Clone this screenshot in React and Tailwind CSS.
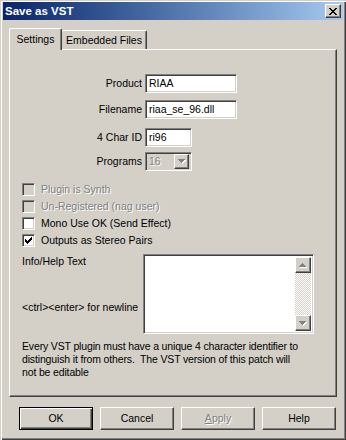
import React from "react";

const CHECK = [
  "......X",
  ".....XX",
  "X...XXX",
  "XX.XXX.",
  "XXXXX..",
  ".XXX...",
  "..X....",
];
const XMARK = [
  "XX....XX",
  ".XX..XX.",
  "..XXXX..",
  "...XX...",
  "..XXXX..",
  ".XX..XX.",
  "XX....XX",
];

function Pix({ rows, color, w, h }) {
  const rects = [];
  rows.forEach((r, y) =>
    r.split("").forEach((c, x) => {
      if (c === "X") rects.push(<rect key={x + "-" + y} x={x} y={y} width="1" height="1" fill={color} />);
    })
  );
  return (
    <svg width={w} height={h} viewBox={`0 0 ${w} ${h}`} shapeRendering="crispEdges">
      {rects}
    </svg>
  );
}

function Arrow({ up, disabled }) {
  const rows = up ? ["...X...", "..XXX..", ".XXXXX.", "XXXXXXX"] : ["XXXXXXX", ".XXXXX.", "..XXX..", "...X..."];
  if (!disabled) return <Pix rows={rows} color="#000" w={7} h={4} />;
  const rects = [];
  rows.forEach((r, y) =>
    r.split("").forEach((c, x) => {
      if (c === "X") {
        rects.push(<rect key={"w" + x + "-" + y} x={x + 1} y={y + 1} width="1" height="1" fill="#fff" />);
      }
    })
  );
  rows.forEach((r, y) =>
    r.split("").forEach((c, x) => {
      if (c === "X") rects.push(<rect key={"g" + x + "-" + y} x={x} y={y} width="1" height="1" fill="#808080" />);
    })
  );
  return (
    <svg width={8} height={5} viewBox="0 0 8 5" shapeRendering="crispEdges">
      {rects}
    </svg>
  );
}

const raised =
  "border border-t-white border-l-white border-r-[#404040] border-b-[#404040] shadow-[inset_-1px_-1px_0_#808080]";
const sunken =
  "border border-t-[#808080] border-l-[#808080] border-r-white border-b-white shadow-[inset_1px_1px_0_#404040,inset_-1px_-1px_0_#d4d0c8]";

function Field({ label, value, width, mt }) {
  return (
    <div className={`flex items-center gap-[3px] h-[19px] ${mt}`}>
      <div className="w-[120px] text-right leading-[13px]">{label}</div>
      <div className={`h-[19px] ${width} bg-white ${sunken} pl-[3px] flex items-center leading-[13px]`}>{value}</div>
    </div>
  );
}

function Check({ label, disabled, checked }) {
  return (
    <div className="flex items-center h-[17px]">
      <div
        className={`w-[13px] h-[13px] ${sunken} ${disabled ? "bg-[#d4d0c8]" : "bg-white"} flex items-center justify-center`}
      >
        {checked && <Pix rows={CHECK} color="#000" w={7} h={7} />}
      </div>
      <span
        className={`ml-[6px] leading-[13px] ${disabled ? "text-[#808080] [text-shadow:1px_1px_0_#fff]" : ""}`}
      >
        {label}
      </span>
    </div>
  );
}

function Btn({ children, def, disabled }) {
  const base = def
    ? "border border-black shadow-[inset_1px_1px_0_#fff,inset_-1px_-1px_0_#404040,inset_-2px_-2px_0_#808080]"
    : raised;
  return (
    <div
      className={`w-[74px] h-[23px] ${base} flex items-center justify-center leading-[13px] ${
        disabled ? "text-[#808080] [text-shadow:1px_1px_0_#fff]" : ""
      }`}
    >
      {children}
    </div>
  );
}

export default function App() {
  return (
    <div className="w-[346px] h-[440px] bg-[#d4d0c8] flex flex-col px-[3px] pt-[2px] text-[10.5px] text-black font-['Liberation_Sans',Arial,sans-serif] shadow-[inset_1px_1px_0_#d4d0c8,inset_2px_2px_0_#fff,inset_-1px_-1px_0_#404040,inset_-2px_-2px_0_#808080] overflow-hidden">
      {/* Title bar */}
      <div className="h-[18px] flex items-center justify-between bg-linear-to-r from-[#0a246a] to-[#a6caf0] pl-[2px] pr-[2px]">
        <span className="text-white font-bold text-[11.5px] leading-[14px]">Save as VST</span>
        <div className={`w-[16px] h-[14px] bg-[#d4d0c8] ${raised} flex items-center justify-center`}>
          <Pix rows={XMARK} color="#000" w={8} h={7} />
        </div>
      </div>

      {/* Tabs */}
      <div className="mx-[6px] mt-[8px] flex items-end h-[21px]">
        <div className="relative z-10 h-[22px] w-[53px] mb-[-1px] bg-[#d4d0c8] border-t border-l border-r border-t-white border-l-white border-r-[#404040] rounded-t-[2px] shadow-[inset_-1px_0_0_#808080] flex justify-center pt-[4px] leading-[13px]">
          Settings
        </div>
        <div className="h-[19px] w-[85px] bg-[#d4d0c8] border-t border-r border-t-white border-r-[#404040] rounded-t-[2px] shadow-[inset_-1px_0_0_#808080] flex justify-center pt-[3px] leading-[13px]">
          Embedded Files
        </div>
      </div>

      {/* Panel */}
      <div className={`mx-[6px] h-[348px] ${raised} pl-[12px] pt-[24px] flex flex-col`}>
        <Field label="Product" value="RIAA" width="w-[92px]" mt="" />
        <Field label="Filename" value="riaa_se_96.dll" width="w-[92px]" mt="mt-[7px]" />
        <Field label="4 Char ID" value="ri96" width="w-[47px]" mt="mt-[9px]" />
        <div className="flex items-center gap-[3px] h-[19px] mt-[5px]">
          <div className="w-[120px] text-right leading-[13px]">Programs</div>
          <div className={`h-[19px] w-[47px] bg-[#d4d0c8] ${sunken} flex items-center`}>
            <span className="pl-[3px] flex-1 text-[#808080] [text-shadow:1px_1px_0_#fff] leading-[13px]">16</span>
            <div className={`w-[15px] h-[15px] mr-[2px] ${raised} flex items-center justify-center`}>
              <Arrow disabled />
            </div>
          </div>
        </div>

        <div className="mt-[10px] flex flex-col">
          <Check label="Plugin is Synth" disabled />
          <Check label="Un-Registered (nag user)" disabled />
          <Check label="Mono Use OK (Send Effect)" />
          <Check label="Outputs as Stereo Pairs" checked />
        </div>

        <div className="flex mt-[5px]">
          <div className="w-[121px] flex flex-col leading-[14px] whitespace-nowrap">
            <span>Info/Help Text</span>
            <span className="mt-[32px]">&lt;ctrl&gt;&lt;enter&gt; for newline</span>
          </div>
          <div className={`w-[171px] h-[80px] bg-white ${sunken} flex justify-end p-[2px]`}>
            <div className="w-[16px] h-full flex flex-col bg-[repeating-conic-gradient(#d4d0c8_0_25%,#fff_0_50%)] bg-size-[2px_2px]">
              <div className={`w-[16px] h-[16px] bg-[#d4d0c8] ${raised} flex items-center justify-center`}>
                <Arrow up disabled />
              </div>
              <div className="flex-1" />
              <div className={`w-[16px] h-[16px] bg-[#d4d0c8] ${raised} flex items-center justify-center`}>
                <Arrow disabled />
              </div>
            </div>
          </div>
        </div>

        <div className="mt-[6px] leading-[13px] whitespace-pre tracking-[-0.15px]">
          {"Every VST plugin must have a unique 4 character identifier to\ndistinguish it from others.  The VST version of this patch will\nnot be editable"}
        </div>
      </div>

      {/* Buttons */}
      <div className="flex mt-[10px] pl-[16px] gap-[7px]">
        <Btn def>OK</Btn>
        <Btn>Cancel</Btn>
        <Btn disabled>
          <span>
            <span className="underline">A</span>pply
          </span>
        </Btn>
        <Btn>Help</Btn>
      </div>
    </div>
  );
}
